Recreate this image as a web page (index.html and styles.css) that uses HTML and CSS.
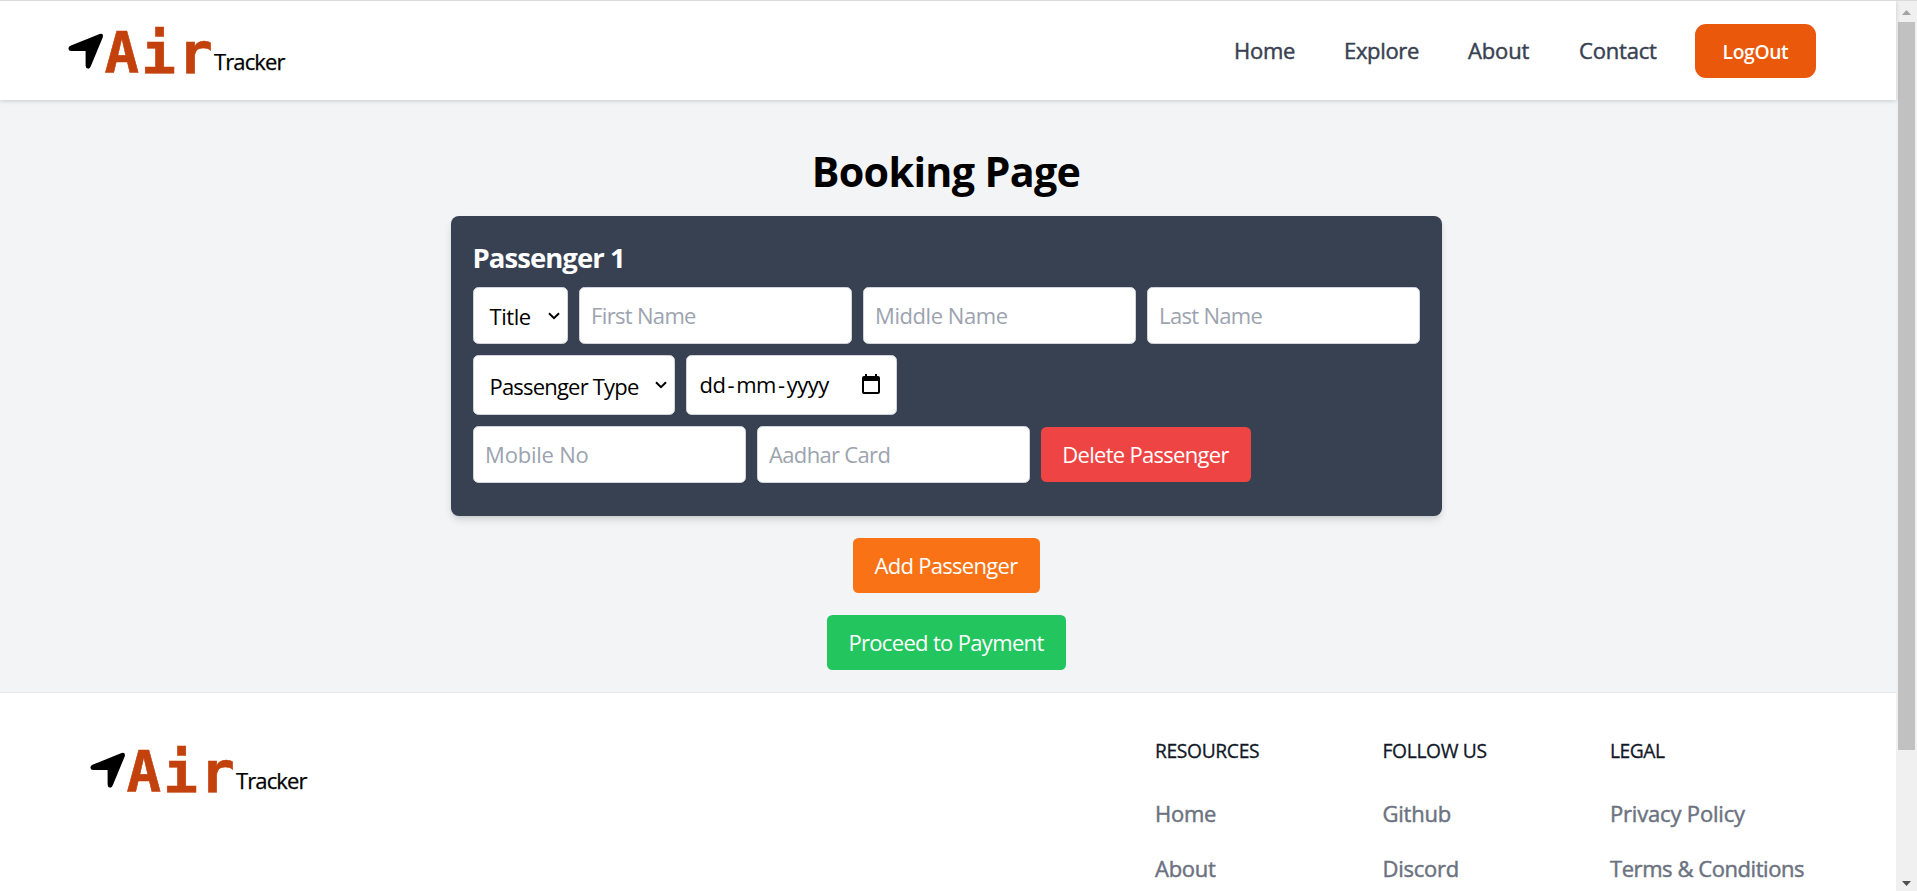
FILE: index.html
```
<!DOCTYPE html>
<html lang="en">
<head>
<meta charset="utf-8">
<title>Booking Page</title>
<link rel="stylesheet" href="styles.css">
</head>
<body>
<div class="page">
  <header class="header">
    <a class="logo">
      <svg class="logo-arrow" viewBox="0 0 36 36"><path d="M3 12.6 31.6 1.1Q35.6 0 34.8 4.2L22.9 33Q21.9 35.9 19.8 35.6 17.6 35.1 17.6 32.6V18.1H3.2Q.6 18 .4 15.8.3 13.7 3 12.6Z"/></svg>
      <span class="logo-air">Air</span><span class="logo-tracker">Tracker</span>
    </a>
    <nav class="nav">
      <a class="nav-home">Home</a><a class="nav-explore">Explore</a><a class="nav-about">About</a><a class="nav-contact">Contact</a>
      <button class="logout">LogOut</button>
    </nav>
  </header>

  <main class="main">
    <h1 class="title">Booking Page</h1>
    <section class="card">
      <h2 class="card-title">Passenger 1</h2>
      <div class="row">
        <div class="field select select-title"><span>Title</span><svg class="chevron" viewBox="0 0 12 8"><path d="M1 1.2 6 6.2 11 1.2"/></svg></div>
        <input class="field text" placeholder="First Name">
        <input class="field text middle" placeholder="Middle Name">
        <input class="field text" placeholder="Last Name">
      </div>
      <div class="row">
        <div class="field select select-type"><span>Passenger Type</span><svg class="chevron" viewBox="0 0 12 8"><path d="M1 1.2 6 6.2 11 1.2"/></svg></div>
        <div class="field date"><span>dd<i>-</i>mm<i>-</i>yyyy</span><svg class="calendar" viewBox="0 0 18 20"><path d="M0 4V18Q0 20 2 20H16Q18 20 18 18V4Q18 2 16 2H15V0H13V2H5V0H3V2H2Q0 2 0 4ZM2 7H16V18H2Z" fill-rule="evenodd"/></svg></div>
      </div>
      <div class="row">
        <input class="field text mobile" placeholder="Mobile No">
        <input class="field text" placeholder="Aadhar Card">
        <button class="btn delete">Delete Passenger</button>
      </div>
    </section>
    <button class="btn add">Add Passenger</button>
    <button class="btn pay">Proceed to Payment</button>
  </main>

  <footer class="footer">
    <a class="logo">
      <svg class="logo-arrow" viewBox="0 0 36 36"><path d="M3 12.6 31.6 1.1Q35.6 0 34.8 4.2L22.9 33Q21.9 35.9 19.8 35.6 17.6 35.1 17.6 32.6V18.1H3.2Q.6 18 .4 15.8.3 13.7 3 12.6Z"/></svg>
      <span class="logo-air">Air</span><span class="logo-tracker">Tracker</span>
    </a>
    <div class="links">
      <div><h3>RESOURCES</h3><a>Home</a><a>About</a></div>
      <div><h3>FOLLOW US</h3><a>Github</a><a>Discord</a></div>
      <div><h3 class="legal">LEGAL</h3><a class="privacy">Privacy Policy</a><a class="terms">Terms &amp; Conditions</a></div>
    </div>
  </footer>
</div>
<div class="scrollbar">
  <svg class="arrow-up" viewBox="0 0 9 5"><path d="M0 5 4.5 0 9 5Z"/></svg>
  <div class="thumb"></div>
  <svg class="arrow-down" viewBox="0 0 9 5"><path d="M0 0H9L4.5 5Z"/></svg>
</div>
</body>
</html>
```
FILE: styles.css
```
* { box-sizing: border-box; }
html, body { height: 100%; margin: 0; overflow: hidden; }
body {
  display: flex;
  border-top: 1px solid #dadada;
  font: 400 22px/33px "Open Sans", "Noto Sans", sans-serif;
  color: #000;
  background: #f3f4f6;
}
h1, h2, h3 { margin: 0; }
button, input { font: inherit; border: 0; margin: 0; }
svg { display: block; flex: none; }

.page { flex: 1; min-width: 0; }

.header {
  position: relative;
  display: flex;
  justify-content: space-between;
  height: 99px;
  padding: 0 80px 0 68px;
  background: #fff;
  box-shadow: 0 1px 4px rgba(0, 0, 0, .17);
}
.logo { display: flex; align-items: flex-start; padding-top: 20px; }
.logo-arrow { width: 36px; height: 36px; margin-top: 12px; }
.logo-air {
  width: 110px;
  padding: 1px 0 0 .5px;
  font: 700 57.5px/64px "DejaVu Sans Mono", monospace;
  letter-spacing: 2.2px;
  color: #c2410c;
  -webkit-text-stroke: .6px #c2410c;
}
.logo-tracker { margin-top: 24px; letter-spacing: -.9px; -webkit-text-stroke: .25px currentColor; }

.nav { display: flex; align-items: center; color: #374151; }
.nav a { -webkit-text-stroke: .45px currentColor; }
.nav-home { width: 110px; letter-spacing: -.27px; }
.nav-explore { width: 124px; letter-spacing: -.33px; }
.nav-about { width: 111px; letter-spacing: -.15px; }
.nav-contact { width: 116px; letter-spacing: -.2px; }
.logout {
  width: 121px;
  height: 54px;
  margin-top: 1px;
  padding: 1px 0 0;
  border-radius: 11px;
  background: #ea580c;
  color: #fff;
  font-size: 19.25px;
  font-weight: 600;
  letter-spacing: -.35px;
}

.main { display: flex; flex-direction: column; align-items: center; height: 592px; padding: 46px 4px 22px 0; }
.title { margin-bottom: 20px; font-size: 41.25px; line-height: 50px; letter-spacing: -.66px; }
.card {
  width: 991px;
  height: 300px;
  margin-bottom: 22px;
  padding: 23px 22px 21px;
  border-radius: 8px;
  background: #374151;
  box-shadow: 0 5px 8px -1px rgba(0, 0, 0, .12), 0 2px 5px -2px rgba(0, 0, 0, .12);
}
.card-title { margin-bottom: 10px; color: #fff; font-size: 27.5px; line-height: 38px; letter-spacing: -.95px; }
.row { display: flex; align-items: center; gap: 11px; margin-bottom: 11px; }
.field { height: 57px; border: 1px solid #d1d5db; border-radius: 5.5px; background: #fff; }
.text { width: 273px; padding: 0 11px 2px 11.6px; letter-spacing: -.68px; }
.text::placeholder { color: #9ca3af; opacity: 1; }
.middle { letter-spacing: -.45px; }
.mobile { letter-spacing: -.22px; }
.select, .date { display: flex; align-items: center; justify-content: space-between; }
.select { padding: 2px 7px 0 16px; }
.select-title { width: 95px; letter-spacing: -.45px; }
.select-type { width: 202px; height: 60px; letter-spacing: -.8px; }
.chevron { width: 12px; height: 8px; margin-top: -2px; fill: none; stroke: #000; stroke-width: 2; }
.date { width: 211px; height: 60px; padding: 0 16px 2px 13px; letter-spacing: -.45px; }
.date i { padding: 0 2px; font-style: normal; }
.calendar { width: 18px; height: 20px; }
.btn { height: 55px; padding: 0; border-radius: 5.5px; color: #fff; flex: none; }
.delete { width: 210px; background: #ef4444; letter-spacing: -.71px; }
.add { width: 187px; margin-bottom: 22px; background: #f97316; letter-spacing: -.7px; }
.pay { width: 239px; background: #22c55e; letter-spacing: -.67px; }

.footer {
  display: flex;
  justify-content: space-between;
  height: 220px;
  padding: 27px 59px 0 90px;
  border-top: 1px solid #e5e7eb;
  background: #fff;
}
.footer .logo { padding-top: 20px; }
.links { display: grid; grid-template-columns: 227.5px 227.5px 227px; padding-top: 17px; color: #6b7280; }
.links h3 {
  margin-bottom: 32px;
  font-size: 19.25px;
  font-weight: 400;
  line-height: 28px;
  letter-spacing: -.36px;
  color: #111827;
  -webkit-text-stroke: .3px currentColor;
}
.links .legal { letter-spacing: -.48px; }
.links a { display: block; margin-bottom: 22px; letter-spacing: -.25px; -webkit-text-stroke: .45px currentColor; }
.links .privacy { letter-spacing: -.18px; }
.links .terms { letter-spacing: -.44px; }

.scrollbar {
  display: flex;
  flex-direction: column;
  align-items: center;
  width: 21px;
  padding: 9px 2px 5px;
  background: #f0f0f0;
}
.arrow-up, .arrow-down { width: 9px; height: 5px; }
.arrow-up { fill: #a3a3a3; }
.arrow-down { margin-top: auto; fill: #505050; }
.thumb { width: 17px; height: 728px; margin-top: 7px; background: #c1c1c1; }
```
